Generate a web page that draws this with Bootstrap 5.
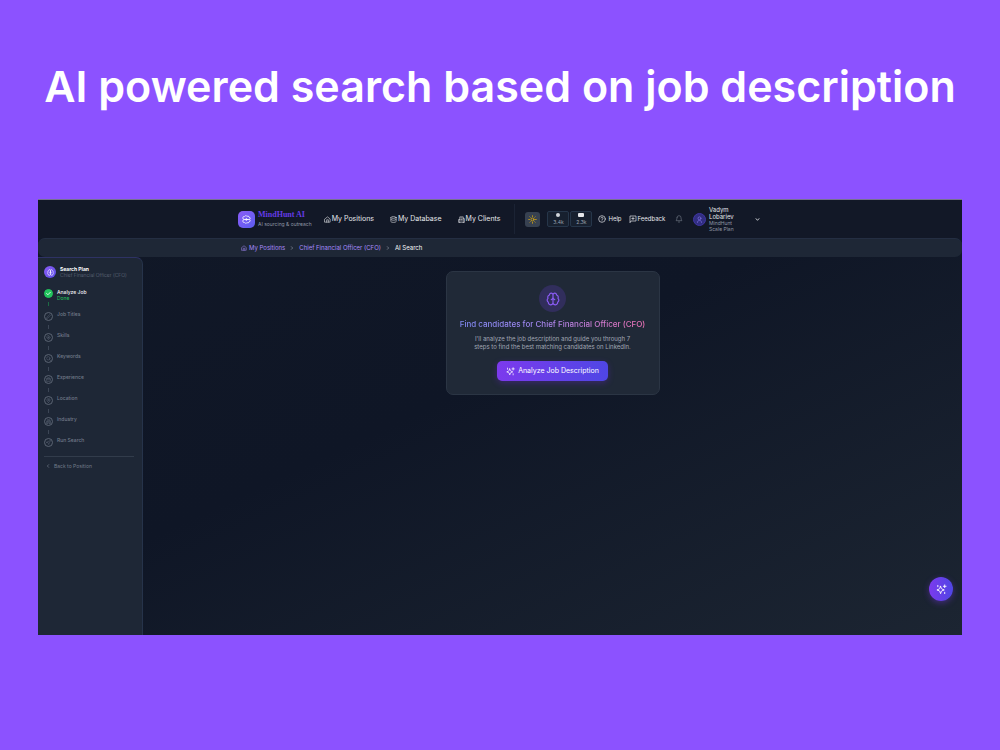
<!DOCTYPE html>
<html lang="en" data-bs-theme="dark">
<head>
<meta charset="utf-8">
<meta name="viewport" content="width=device-width, initial-scale=1">
<title>MindHunt AI – AI Search</title>
<link href="https://cdn.jsdelivr.net/npm/bootstrap@5.3.0/dist/css/bootstrap.min.css" rel="stylesheet">
<style>
body{background:#8c52ff;font-family:Inter,"Liberation Sans",sans-serif;font-size:6px;line-height:8px;color:#e5e7eb}
a{text-decoration:none;color:inherit}
svg{fill:none;stroke:currentColor;stroke-width:2;stroke-linecap:round;stroke-linejoin:round;display:block;flex:none}
.page{padding:56px 38px 115px}
.headline{font-weight:600;font-size:43px;line-height:60px;color:#fff;margin:0 -20px 83px;text-align:center}
.app{background:linear-gradient(155deg,#111827 0%,#0f1626 45%,#1c2532 100%);border-top:1px solid #77728f}
.topbar{background:#121827;height:38px}
.inner{width:100%;max-width:524px;margin:0 auto}
.logo{width:17px;height:17px;border-radius:5px;background:linear-gradient(135deg,#8b5cf6,#5b5df0);color:#fff}
.turned{transform:rotate(90deg)}
.brand-text{margin-left:3px;gap:2px}
.brand-name{font:700 8px/8px "Liberation Serif",serif;color:#653be6}
.tiny{font-size:5px;line-height:6px}
.muted{color:#8f97a5}
.gap-px{gap:1px}
.gap-2px{gap:2px}
.main-nav{gap:16px;font-size:7px;margin-left:12px}
.tools{border-left:1px solid #1b2334;height:30px;margin-left:14px;padding:0 2px 0 10px}
.plain{border:0;background:none;padding:0;color:inherit;text-align:left}
.sun-btn{width:15px;height:15px;border-radius:3px;background:#374151;color:#eab308}
.chips{margin:0 6px 0 7px;gap:1px}
.chip{width:22px;height:16px;border:1px solid #26364a;border-radius:2px;background:#17202f;color:#9ca3af;padding:1px 0}
.dot{width:4px;height:4px;border-radius:50%;background:#d1d5db}
.mailbar{width:6px;height:4px;border-radius:1px;background:#e5e7eb}
.help-links{gap:7px}
.bell{margin-left:10px;color:#6b7280}
.avatar{width:13px;height:13px;border-radius:50%;background:#312e81;border:1px solid #3f35a5;color:#8d7cf5}
.user-btn{width:67px;gap:3px}
.user-name{font-size:6px;line-height:7px;color:#e5e7eb}
.crumbs{background:#1e2736;height:19px;border-radius:7px;border-top:1px solid #242e42}
.crumbs .breadcrumb{font-size:6px;color:#a78bfa;gap:5px;padding-left:3px}
.sidebar{width:105px;background:#1e2736;border-top:1px solid #2e3264;border-right:1px solid #26334a;border-radius:0 7px 0 0;padding:8px 8px 0 6px}
.plan-head{margin-bottom:11px}
.plan-ico{width:12px;height:12px;border-radius:50%;background:linear-gradient(135deg,#8b5cf6,#5b50e8);color:#fff}
.plan-sub{color:#667080}
.step{height:21px;gap:4px;color:#727b8a;font-size:5px;line-height:6px;font-weight:500}
.step-label{margin-top:-1px}
.step-rail{width:9px;gap:4px}
.step-ico{width:9px;height:9px;border:1px solid #5b6473;border-radius:50%;color:#667080;flex:none}
.step-rail i{width:1px;height:4px;background:#3c4656}
.step.done{height:23px;color:#f3f4f6}
.done .step-label{margin-top:0}
.done .step-ico{background:#22c55e;border-color:#22c55e;color:#fff}
.done .step-rail i{background:#1d6b45}
.step.last{height:14px}
.ok{color:#22c55e;font-weight:400}
.back{border-top:1px solid #323c4b;padding:6px 2px;color:#727b8a;margin-top:4px}
.find{width:214px;margin:14px auto 0;background:#202937;border:1px solid #2b3544;border-radius:7px;padding:13px 10px}
.find-ico{width:27px;height:27px;border-radius:50%;background:#312e5c;color:#8b5cf6}
.find h2{font-size:8px;line-height:12px;font-weight:500;margin:6px 0 5px;background:linear-gradient(90deg,#818cf8,#a78bfa 40%,#f472b6);-webkit-background-clip:text;background-clip:text;color:transparent}
.find p{color:#a0a7b4;font-size:6px;line-height:8px;margin:0 0 10px}
.cta{height:20px;padding:0 9px;border:0;border-radius:5px;font-size:7px;line-height:10px;color:#fff;gap:3px;background:linear-gradient(90deg,#7c3aed,#4f46e5);box-shadow:0 2px 6px #6d28d955}
.fab{width:24px;height:24px;right:9px;bottom:34px;border:0;border-radius:50%;color:#fff;background:linear-gradient(90deg,#7c3aed,#4f46e5);box-shadow:0 2px 6px #7c3aed66}
</style>
</head>
<body>
<svg class="d-none">
<symbol id="brain" viewBox="0 0 24 24"><path d="M12 5a3 3 0 1 0-5.997.125 4 4 0 0 0-2.526 5.77 4 4 0 0 0 .556 6.588A4 4 0 1 0 12 18ZM12 5a3 3 0 1 1 5.997.125 4 4 0 0 1 2.526 5.77 4 4 0 0 1-.556 6.588A4 4 0 1 1 12 18ZM9 13a4.500 4.500 0 0 0 3-4 4.500 4.500 0 0 0 3 4"/></symbol>
<symbol id="spark" viewBox="0 0 24 24"><path d="M10 5l1.800 4.700a2 2 0 0 0 1.200 1.200L18 13l-5 1.800a2 2 0 0 0-1.200 1.200L10 21l-1.800-5a2 2 0 0 0-1.200-1.200L2 13l5-2.100a2 2 0 0 0 1.200-1.200ZM19 2v6M16 5h6M4 3v3M19 18v3"/></symbol>
<symbol id="home" viewBox="0 0 24 24"><path d="M3 10 12 3l9 7v11H3ZM9 21v-8h6v8"/></symbol>
<symbol id="db" viewBox="0 0 24 24"><ellipse cx="12" cy="5" rx="9" ry="3"/><path d="M3 5v14c0 4 18 4 18 0V5M3 12c0 4 18 4 18 0"/></symbol>
<symbol id="bld" viewBox="0 0 24 24"><path d="M6 22V3h12v19ZM6 12H2v10h4M18 9h4v13h-4M10 7h4M10 12h4M10 17h4"/></symbol>
<symbol id="sun" viewBox="0 0 24 24"><circle cx="12" cy="12" r="4"/><path d="M12 2v2M12 20v2M5 5l1 1M18 18l1 1M2 12h2M20 12h2M5 19l1-1M18 6l1-1"/></symbol>
<symbol id="help" viewBox="0 0 24 24"><circle cx="12" cy="12" r="10"/><path d="M9 9a3 3 0 0 1 6 1c0 2-3 2-3 4M12 17.500v.1"/></symbol>
<symbol id="msg" viewBox="0 0 24 24"><path d="M3 22V3h18v15H7ZM12 7v7M8.500 10.500h7"/></symbol>
<symbol id="bell" viewBox="0 0 24 24"><path d="M6 8a6 6 0 0 1 12 0c0 7 3 9 3 9H3s3-2 3-9M10 21h4"/></symbol>
<symbol id="user" viewBox="0 0 24 24"><circle cx="12" cy="8" r="5"/><path d="M5 22c0-10 14-10 14 0"/></symbol>
<symbol id="down" viewBox="0 0 24 24"><path d="m5 8 7 8 7-8" stroke-width="4"/></symbol>
<symbol id="right" viewBox="0 0 24 24"><path d="m8 4 8 8-8 8" stroke-width="4"/></symbol>
<symbol id="left" viewBox="0 0 24 24"><path d="m16 4-8 8 8 8" stroke-width="4"/></symbol>
<symbol id="check" viewBox="0 0 24 24"><path d="M3 12l6 6L21 6" stroke-width="4"/></symbol>
<symbol id="pen" viewBox="0 0 24 24"><path d="M3 21l2-6L17 3l4 4L9 19Z"/></symbol>
<symbol id="zap" viewBox="0 0 24 24"><path d="M12 2l9 10-9 10-9-10ZM12 8v8M8 12h8"/></symbol>
<symbol id="search" viewBox="0 0 24 24"><circle cx="11" cy="11" r="8"/><path d="m17 17 5 5"/></symbol>
<symbol id="case" viewBox="0 0 24 24"><path d="M3 7h18v14H3ZM8 7V3h8v4M3 13h18"/></symbol>
<symbol id="pin" viewBox="0 0 24 24"><path d="M12 22S4 16 4 10a8 8 0 0 1 16 0c0 6-8 12-8 12Z"/><circle cx="12" cy="10" r="3"/></symbol>
<symbol id="play" viewBox="0 0 24 24"><path d="M2 11 22 2l-9 20-3-8Z"/></symbol>
</svg>
<div class="page min-vh-100 d-flex flex-column">
<h1 class="headline">AI powered search based on job description</h1>
<div class="app flex-grow-1 d-flex flex-column position-relative">
<header class="topbar d-flex align-items-center">
<div class="inner d-flex align-items-center text-nowrap">
<a href="#" class="d-flex align-items-center">
<span class="logo d-flex align-items-center justify-content-center"><svg width="9" height="9" class="turned"><use href="#brain"/></svg></span>
<span class="brand-text d-flex flex-column"><span class="brand-name">MindHunt AI</span><span class="tiny muted">AI sourcing &amp; outreach</span></span></a>
<nav class="main-nav d-flex align-items-center">
<a href="#" class="d-flex align-items-center gap-px"><svg width="7" height="7"><use href="#home"/></svg>My Positions</a>
<a href="#" class="d-flex align-items-center gap-px"><svg width="7" height="7"><use href="#db"/></svg>My Database</a>
<a href="#" class="d-flex align-items-center gap-px"><svg width="7" height="7"><use href="#bld"/></svg>My Clients</a>
</nav>
<div class="tools d-flex align-items-center flex-grow-1">
<button class="plain sun-btn d-flex align-items-center justify-content-center" aria-label="Theme"><svg width="9" height="9"><use href="#sun"/></svg></button>
<div class="d-flex tiny chips">
<span class="chip d-flex flex-column align-items-center justify-content-between"><span class="dot"></span>3.4k</span>
<span class="chip d-flex flex-column align-items-center justify-content-between"><span class="mailbar"></span>2.3k</span>
</div>
<div class="help-links d-flex">
<a href="#" class="d-flex align-items-center gap-2px"><svg width="8" height="8"><use href="#help"/></svg>Help</a>
<a href="#" class="d-flex align-items-center gap-px"><svg width="8" height="8"><use href="#msg"/></svg>Feedback</a>
</div>
<button class="plain bell" aria-label="Notifications"><svg width="8" height="8"><use href="#bell"/></svg></button>
<button class="plain user-btn d-flex align-items-center ms-auto">
<span class="avatar d-flex align-items-center justify-content-center"><svg width="7" height="7"><use href="#user"/></svg></span>
<span class="tiny muted"><span class="user-name d-block">Vadym<br>Lobariev</span>MindHunt<br>Scale Plan</span>
<svg width="5" height="5" class="ms-auto"><use href="#down"/></svg></button>
</div>
</div>
</header>
<nav class="crumbs d-flex align-items-center" aria-label="breadcrumb">
<div class="inner"><div class="breadcrumb d-flex align-items-center mb-0">
<a href="#" class="d-flex align-items-center gap-2px"><svg width="6" height="6"><use href="#home"/></svg>My Positions</a>
<svg width="4" height="4" class="muted"><use href="#right"/></svg>
<a href="#">Chief Financial Officer (CFO)</a>
<svg width="4" height="4" class="muted"><use href="#right"/></svg>
<span class="text-light">AI Search</span></div></div>
</nav>
<div class="d-flex flex-grow-1">
<aside class="sidebar flex-shrink-0">
<div class="plan-head d-flex align-items-center gap-1 tiny"><span class="plan-ico d-flex align-items-center justify-content-center"><svg width="7" height="7"><use href="#brain"/></svg></span>
<span class="text-nowrap"><b class="text-white">Search Plan</b><br><span class="plan-sub fw-light">Chief Financial Officer (CFO)</span></span></div>
<div class="step done d-flex"><span class="step-rail d-flex flex-column align-items-center"><span class="step-ico d-flex align-items-center justify-content-center"><svg width="5" height="5"><use href="#check"/></svg></span><i></i></span><span class="step-label">Analyze Job<br><span class="ok">Done</span></span></div>
<div class="step d-flex"><span class="step-rail d-flex flex-column align-items-center"><span class="step-ico d-flex align-items-center justify-content-center"><svg width="5" height="5"><use href="#pen"/></svg></span><i></i></span><span class="step-label">Job Titles</span></div>
<div class="step d-flex"><span class="step-rail d-flex flex-column align-items-center"><span class="step-ico d-flex align-items-center justify-content-center"><svg width="5" height="5"><use href="#zap"/></svg></span><i></i></span><span class="step-label">Skills</span></div>
<div class="step d-flex"><span class="step-rail d-flex flex-column align-items-center"><span class="step-ico d-flex align-items-center justify-content-center"><svg width="5" height="5"><use href="#search"/></svg></span><i></i></span><span class="step-label">Keywords</span></div>
<div class="step d-flex"><span class="step-rail d-flex flex-column align-items-center"><span class="step-ico d-flex align-items-center justify-content-center"><svg width="5" height="5"><use href="#case"/></svg></span><i></i></span><span class="step-label">Experience</span></div>
<div class="step d-flex"><span class="step-rail d-flex flex-column align-items-center"><span class="step-ico d-flex align-items-center justify-content-center"><svg width="5" height="5"><use href="#pin"/></svg></span><i></i></span><span class="step-label">Location</span></div>
<div class="step d-flex"><span class="step-rail d-flex flex-column align-items-center"><span class="step-ico d-flex align-items-center justify-content-center"><svg width="5" height="5"><use href="#bld"/></svg></span><i></i></span><span class="step-label">Industry</span></div>
<div class="step last d-flex"><span class="step-rail d-flex flex-column align-items-center"><span class="step-ico d-flex align-items-center justify-content-center"><svg width="5" height="5"><use href="#play"/></svg></span></span><span class="step-label">Run Search</span></div>
<a href="#" class="back tiny d-flex align-items-center gap-1"><svg width="4" height="4"><use href="#left"/></svg>Back to Position</a>
</aside>
<main class="flex-grow-1">
<section class="find text-center">
<span class="find-ico d-inline-flex align-items-center justify-content-center"><svg width="14" height="14"><use href="#brain"/></svg></span>
<h2>Find candidates for Chief Financial Officer (CFO)</h2>
<p>I'll analyze the job description and guide you through 7<br>steps to find the best matching candidates on LinkedIn.</p>
<button class="cta d-inline-flex align-items-center"><svg width="9" height="9"><use href="#spark"/></svg>Analyze Job Description</button>
</section>
</main>
</div>
<button class="fab position-absolute d-flex align-items-center justify-content-center p-0" aria-label="Assistant"><svg width="11" height="11"><use href="#spark"/></svg></button>
</div>
</div>
<script src="https://cdn.jsdelivr.net/npm/bootstrap@5.3.0/dist/js/bootstrap.bundle.min.js"></script>
</body>
</html>
